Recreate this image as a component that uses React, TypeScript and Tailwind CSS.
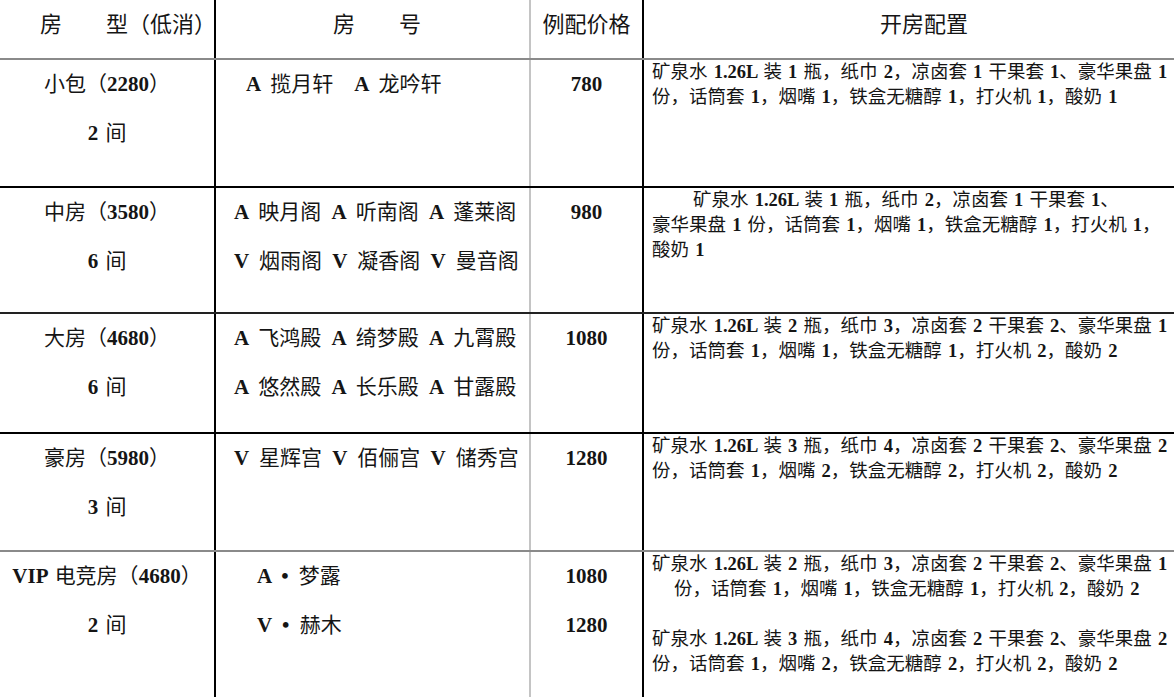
import type { ReactNode } from 'react';

// latin letters and digits are bold Times-like, the Chinese is plain
const rich = (text: string): ReactNode[] =>
  text.split(/([\x20-\x7E•]+)/).map((part, i) =>
    /^[\x20-\x7E•]+$/.test(part) ? (
      <b key={i} className="font-bold">
        {part}
      </b>
    ) : (
      <span key={i}>{part}</span>
    )
  );

type Row = {
  type: string;
  count: string;
  rooms: string[];
  roomsPad: string;
  prices: string[];
  config: { text: string; indent?: string }[];
  height: string;
  border: string;
};

const rows: Row[] = [
  {
    type: '小包（2280）',
    count: '2 间',
    rooms: ['A 揽月轩　A 龙吟轩'],
    roomsPad: 'pl-[30px]',
    prices: ['780'],
    config: [
      { text: '矿泉水 1.26L 装 1 瓶，纸巾 2，凉卤套 1 干果套 1、豪华果盘 1' },
      { text: '份，话筒套 1，烟嘴 1，铁盒无糖醇 1，打火机 1，酸奶 1' },
    ],
    height: 'h-[128px]',
    border: 'border-black',
  },
  {
    type: '中房（3580）',
    count: '6 间',
    rooms: ['A 映月阁 A 听南阁 A 蓬莱阁', 'V 烟雨阁 V 凝香阁 V 曼音阁'],
    roomsPad: 'pl-[18px]',
    prices: ['980'],
    config: [
      { text: '矿泉水 1.26L 装 1 瓶，纸巾 2，凉卤套 1 干果套 1、', indent: 'pl-[41px]' },
      { text: '豪华果盘 1 份，话筒套 1，烟嘴 1，铁盒无糖醇 1，打火机 1，' },
      { text: '酸奶 1' },
    ],
    height: 'h-[126px]',
    border: 'border-[#222]',
  },
  {
    type: '大房（4680）',
    count: '6 间',
    rooms: ['A 飞鸿殿 A 绮梦殿 A 九霄殿', 'A 悠然殿 A 长乐殿 A 甘露殿'],
    roomsPad: 'pl-[18px]',
    prices: ['1080'],
    config: [
      { text: '矿泉水 1.26L 装 2 瓶，纸巾 3，凉卤套 2 干果套 2、豪华果盘 1' },
      { text: '份，话筒套 1，烟嘴 1，铁盒无糖醇 1，打火机 2，酸奶 2' },
    ],
    height: 'h-[120px]',
    border: 'border-black',
  },
  {
    type: '豪房（5980）',
    count: '3 间',
    rooms: ['V 星辉宫 V 佰俪宫 V 储秀宫'],
    roomsPad: 'pl-[18px]',
    prices: ['1280'],
    config: [
      { text: '矿泉水 1.26L 装 3 瓶，纸巾 4，凉卤套 2 干果套 2、豪华果盘 2' },
      { text: '份，话筒套 1，烟嘴 2，铁盒无糖醇 2，打火机 2，酸奶 2' },
    ],
    height: 'h-[118px]',
    border: 'border-[#8a8a8a]',
  },
  {
    type: 'VIP 电竞房（4680）',
    count: '2 间',
    rooms: ['A • 梦露', 'V • 赫木'],
    roomsPad: 'pl-[41px]',
    prices: ['1080', '1280'],
    config: [
      { text: '矿泉水 1.26L 装 2 瓶，纸巾 3，凉卤套 2 干果套 2、豪华果盘 1' },
      { text: '份，话筒套 1，烟嘴 1，铁盒无糖醇 1，打火机 2，酸奶 2', indent: 'pl-[22px]' },
      { text: '' },
      { text: '矿泉水 1.26L 装 3 瓶，纸巾 4，凉卤套 2 干果套 2、豪华果盘 2' },
      { text: '份，话筒套 1，烟嘴 2，铁盒无糖醇 2，打火机 2，酸奶 2' },
    ],
    height: 'h-[147px]',
    border: 'border-transparent',
  },
];

const App = () => {
  return (
    <div className="w-[1174px] h-[698px] overflow-hidden bg-white text-[#151515] font-['Liberation_Serif','Noto_Sans_CJK_SC',serif]">
      {/* Header */}
      <div className="grid grid-cols-[216px_315px_113px_1fr] h-[60px] border-b-2 border-[#8a8a8a] text-[22px] leading-[49px] whitespace-nowrap">
        <div className="border-r-2 border-black pl-[40px]">房　　型（低消）</div>
        <div className="border-r-2 border-[#c4c4c4] pl-[117px]">房　　号</div>
        <div className="border-r-2 border-black text-center">例配价格</div>
        <div className="pl-[236px]">开房配置</div>
      </div>

      {rows.map((row) => (
        <div
          key={row.type}
          className={`grid grid-cols-[216px_315px_113px_1fr] border-b-2 ${row.height} ${row.border}`}
        >
          {/* Type */}
          <div className="border-r-2 border-black text-center text-[21px] leading-[49px] whitespace-nowrap [word-spacing:2px]">
            <div>{rich(row.type)}</div>
            <div>{rich(row.count)}</div>
          </div>

          {/* Rooms */}
          <div className={`border-r-2 border-[#c4c4c4] text-[21px] leading-[49px] whitespace-nowrap [word-spacing:5px] ${row.roomsPad}`}>
            {row.rooms.map((r) => (
              <div key={r}>{rich(r)}</div>
            ))}
          </div>

          {/* Price */}
          <div className="border-r-2 border-black text-center text-[21px] leading-[49px] font-bold">
            {row.prices.map((p, i) => (
              <div key={i}>{p}</div>
            ))}
          </div>

          {/* Config */}
          <div className="pl-[8px] text-[18.5px] leading-[25px] whitespace-nowrap [word-spacing:1.5px]">
            {row.config.map((line, i) => (
              <div key={i} className={`h-[25px] ${line.indent ?? ''}`}>
                {rich(line.text)}
              </div>
            ))}
          </div>
        </div>
      ))}
    </div>
  );
};

export default App;
